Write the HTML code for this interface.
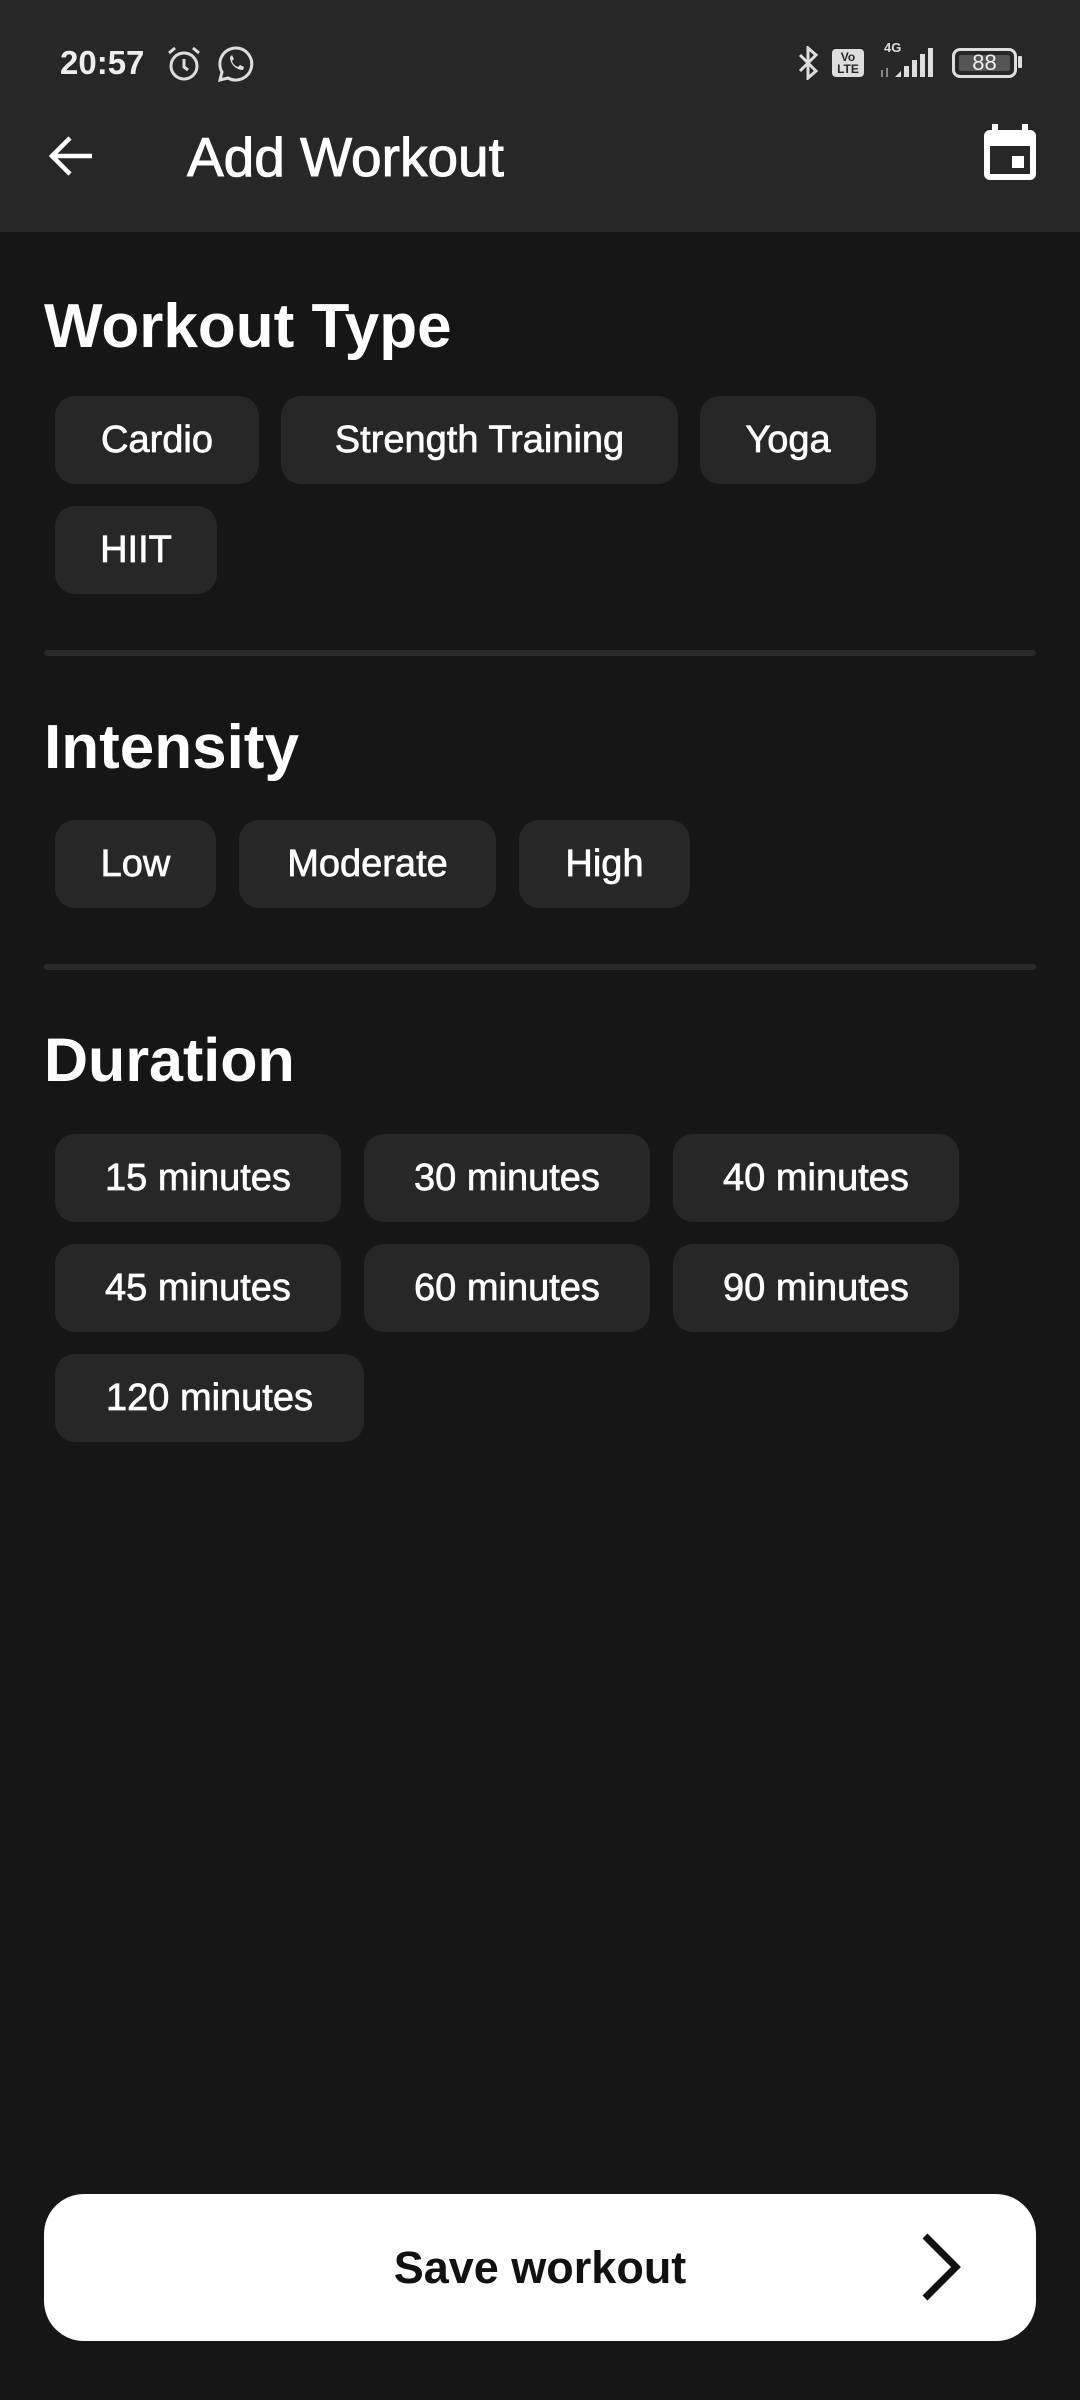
<!DOCTYPE html>
<html><head><meta charset="utf-8"><style>
*{margin:0;padding:0;box-sizing:border-box}
body{width:1080px;height:2400px;background:#161616;font-family:"Liberation Sans",sans-serif;color:#fff;position:relative;overflow:hidden}
.hdr{position:absolute;left:0;top:0;width:1080px;height:232px;background:#272727}
.abs{position:absolute}
.h{position:absolute;left:44px;font-weight:bold;font-size:62px;line-height:1}
.chip{position:absolute;height:88px;background:#272727;border-radius:20px;font-size:38px;line-height:88px;text-align:center;-webkit-text-stroke:0.7px #fff}
.div{position:absolute;left:44px;width:992px;height:6px;background:#2a2a2a;border-radius:3px}
</style></head><body>
<div class="hdr"></div>
<div class="abs" style="left:60px;top:44px;font-size:33px;font-weight:bold;color:#eee">20:57</div>
<svg class="abs" style="left:164px;top:44px" width="40" height="40" viewBox="0 0 40 40" fill="none" stroke="#ddd" stroke-width="3"><circle cx="20" cy="22" r="13"/><path d="M20 15v8l4 3M5 9l6-5M35 9l-6-5"/></svg>
<svg class="abs" style="left:216px;top:44px" width="40" height="40" viewBox="0 0 40 40" fill="none" stroke="#ddd" stroke-width="3"><path d="M20 4a16 16 0 1 1-8 30l-8 2 2-8A16 16 0 0 1 20 4z"/><path d="M14 13c0 7 6 13 13 13l1-3-4-2-2 2c-3-1-5-3-6-6l2-2-2-4z" fill="#ddd" stroke="none"/></svg>
<svg class="abs" style="left:797px;top:46px" width="24" height="34" viewBox="0 0 24 34" fill="none" stroke="#ddd" stroke-width="3"><path d="M3 9l16 16-8 7V2l8 7L3 25"/></svg>
<div class="abs" style="left:832px;top:49px;width:32px;height:28px;background:#ddd;border-radius:4px;color:#272727;font-size:12px;font-weight:bold;line-height:12px;text-align:center;padding-top:2px">Vo<br>LTE</div>
<div class="abs" style="left:884px;top:40px;font-size:13px;font-weight:bold;color:#ddd">4G</div>
<svg class="abs" style="left:879px;top:46px" width="60" height="32" viewBox="0 0 60 32" fill="#ddd"><rect x="2" y="24" width="2" height="7" fill="#888"/><rect x="7" y="22" width="2" height="9" fill="#888"/><path d="M16 31l6-6v6z"/><rect x="25" y="20" width="5" height="11"/><rect x="33" y="14" width="5" height="17"/><rect x="41" y="8" width="5" height="23"/><rect x="49" y="2" width="5" height="29"/></svg>
<div class="abs" style="left:952px;top:48px;width:65px;height:30px;border:3px solid #ddd;border-radius:8px"><div style="position:absolute;left:4px;top:4px;width:51px;height:16px;background:#555;border-radius:2px"></div><div style="position:absolute;left:0;top:0;width:59px;text-align:center;font-size:22px;line-height:24px;color:#eee">88</div></div>
<div class="abs" style="left:1018px;top:56px;width:4px;height:12px;background:#ddd;border-radius:1px"></div>
<svg class="abs" style="left:46px;top:130px" width="52" height="52" viewBox="0 0 52 52" fill="none" stroke="#fff" stroke-width="4.5"><path d="M46 26H6M24 8L6 26l18 18"/></svg>
<div class="abs" style="left:187px;top:128px;font-size:55px;line-height:58px;-webkit-text-stroke:1px #fff">Add Workout</div>
<svg class="abs" style="left:984px;top:124px" width="52" height="56" viewBox="0 0 52 56" fill="#fff"><rect x="8" y="0" width="6" height="10"/><rect x="38" y="0" width="6" height="10"/><path d="M6 6h40a6 6 0 0 1 6 6v38a6 6 0 0 1-6 6H6a6 6 0 0 1-6-6V12a6 6 0 0 1 6-6zM6 22v28h40V22z" fill-rule="evenodd"/><rect x="28" y="32" width="12" height="12"/></svg>

<div class="h" style="top:296px;font-size:62px">Workout Type</div>
<div class="chip" style="left:55px;top:396px;width:204px">Cardio</div>
<div class="chip" style="left:281px;top:396px;width:397px">Strength Training</div>
<div class="chip" style="left:700px;top:396px;width:176px">Yoga</div>
<div class="chip" style="left:55px;top:506px;width:162px">HIIT</div>
<div class="div" style="top:650px"></div>

<div class="h" style="top:717px">Intensity</div>
<div class="chip" style="left:55px;top:820px;width:161px">Low</div>
<div class="chip" style="left:239px;top:820px;width:257px">Moderate</div>
<div class="chip" style="left:519px;top:820px;width:171px">High</div>
<div class="div" style="top:964px"></div>

<div class="h" style="top:1030px;font-size:61px">Duration</div>
<div class="chip" style="left:55px;top:1134px;width:286px">15 minutes</div>
<div class="chip" style="left:364px;top:1134px;width:286px">30 minutes</div>
<div class="chip" style="left:673px;top:1134px;width:286px">40 minutes</div>
<div class="chip" style="left:55px;top:1244px;width:286px">45 minutes</div>
<div class="chip" style="left:364px;top:1244px;width:286px">60 minutes</div>
<div class="chip" style="left:673px;top:1244px;width:286px">90 minutes</div>
<div class="chip" style="left:55px;top:1354px;width:309px">120 minutes</div>

<div class="abs" style="left:44px;top:2194px;width:992px;height:147px;background:#fff;border-radius:40px"></div>
<div class="abs" style="left:44px;top:2194px;width:992px;height:147px;line-height:147px;text-align:center;color:#111;font-weight:bold;font-size:45px">Save workout</div>
<svg class="abs" style="left:916px;top:2232px" width="50" height="70" viewBox="0 0 50 70" fill="none" stroke="#111" stroke-width="7"><path d="M9 4l31 31L9 66"/></svg>
</body></html>
